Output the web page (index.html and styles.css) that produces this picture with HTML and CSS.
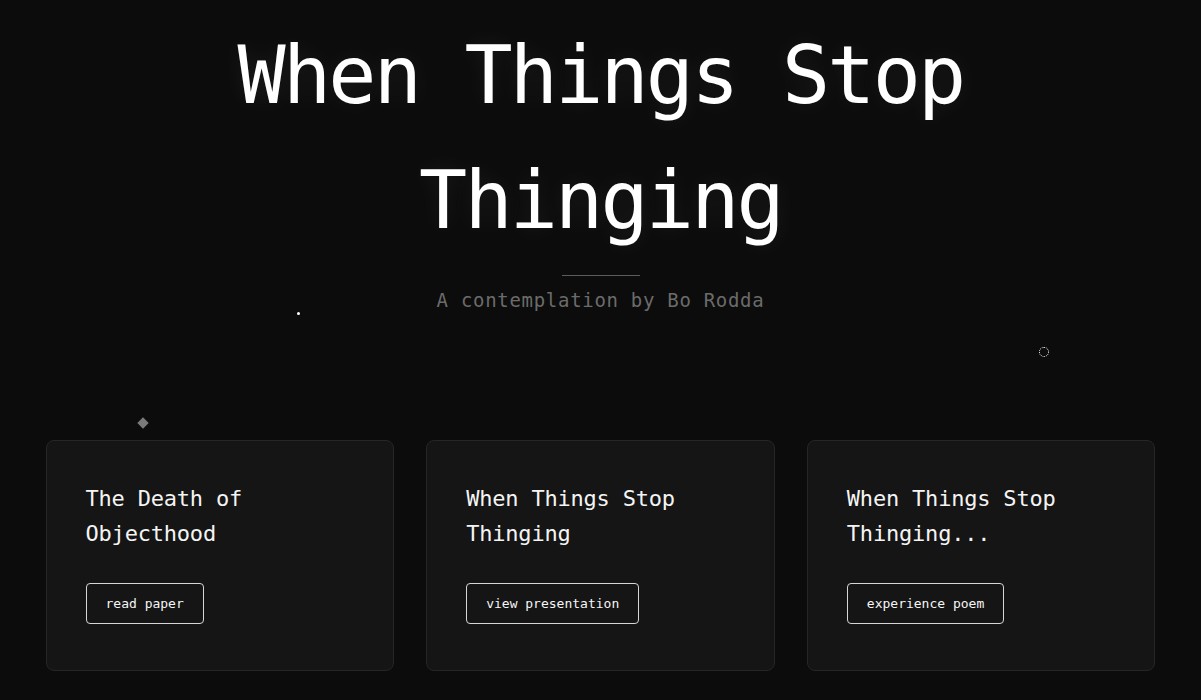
FILE: index.html
```html
<!DOCTYPE html>
<html lang="en">
<head>
<meta charset="utf-8">
<title>When Things Stop Thinging</title>
<link rel="stylesheet" href="styles.css">
</head>
<body>
<div class="page">
  <span class="particle dot"></span>
  <span class="particle diamond"></span>
  <span class="particle ring"></span>

  <header class="hero">
    <h1 class="title">When Things Stop Thinging</h1>
    <div class="rule"></div>
    <p class="subtitle">A contemplation by Bo Rodda</p>
  </header>

  <main class="cards">
    <section class="card">
      <h2 class="card-title">The Death of Objecthood</h2>
      <a class="btn" href="#">read paper</a>
    </section>
    <section class="card">
      <h2 class="card-title">When Things Stop Thinging</h2>
      <a class="btn" href="#">view presentation</a>
    </section>
    <section class="card">
      <h2 class="card-title">When Things Stop Thinging...</h2>
      <a class="btn" href="#">experience poem</a>
    </section>
  </main>
</div>
</body>
</html>
```

FILE: styles.css
```css
* { box-sizing: border-box; }

html, body {
  margin: 0;
  padding: 0;
  background: #0c0c0c;
  color: #fff;
  font-family: "DejaVu Sans Mono", "Liberation Mono", monospace;
}

.page {
  position: relative;
  min-height: 700px;
  padding-top: 13px;
  overflow: hidden;
}

.hero {
  text-align: center;
}

.title {
  margin: 0 auto;
  max-width: 900px;
  font-size: 80px;
  line-height: 125px;
  font-weight: 400;
  letter-spacing: -2.8px;
  color: #fff;
  text-shadow: 0 0 22px rgba(255, 255, 255, 0.08);
}

.rule {
  width: 78px;
  height: 1px;
  margin: 12px auto 0;
  background: #5c5c5c;
}

.subtitle {
  margin: 10px 0 0;
  font-size: 19px;
  line-height: 28px;
  letter-spacing: 0.7px;
  color: #6b6b6b;
}

.cards {
  display: grid;
  grid-template-columns: repeat(3, 1fr);
  gap: 32px;
  width: 1110px;
  margin: 126px auto 0;
}

.card {
  background: #151515;
  border: 1px solid #262626;
  border-radius: 8px;
  padding: 40px 40px 46px 39px;
}

.card-title {
  margin: 0 0 32px;
  font-size: 22px;
  line-height: 35px;
  font-weight: 400;
  letter-spacing: -0.2px;
  color: #f4f4f4;
}

.btn {
  display: inline-block;
  padding: 10px 19px;
  border: 1px solid #d6d6d6;
  border-radius: 4px;
  font-size: 13px;
  line-height: 19px;
  color: #f6f6f6;
  text-decoration: none;
}

.particle {
  position: absolute;
  display: block;
}

.dot {
  left: 297px;
  top: 312px;
  width: 3px;
  height: 3px;
  border-radius: 50%;
  background: #fff;
}

.diamond {
  left: 139px;
  top: 419px;
  width: 8px;
  height: 8px;
  background: #7a7a7a;
  transform: rotate(45deg);
}

.ring {
  left: 1039px;
  top: 347px;
  width: 10px;
  height: 10px;
  border: 1px dotted #ffffff;
  border-radius: 50%;
}
```
